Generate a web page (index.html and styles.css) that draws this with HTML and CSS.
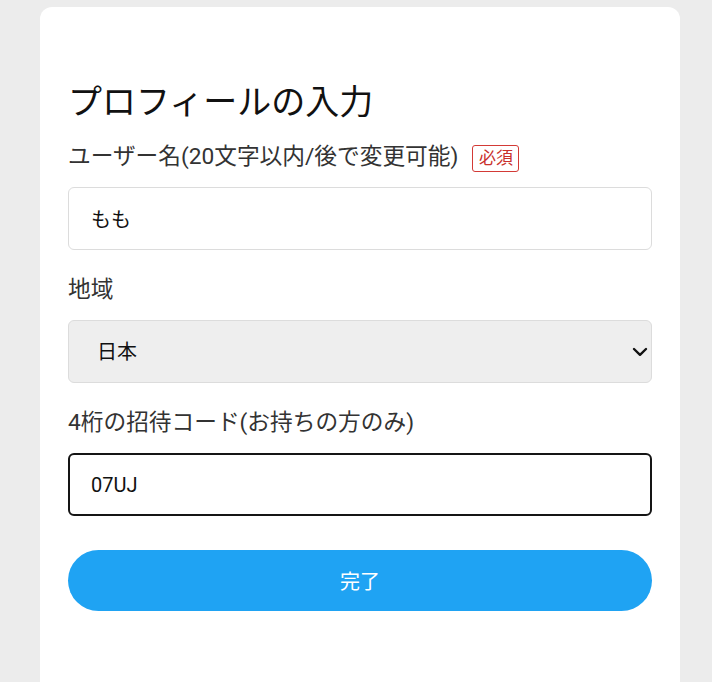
FILE: index.html
```html
<!DOCTYPE html>
<html lang="ja">
<head>
<meta charset="utf-8">
<title>プロフィールの入力</title>
<link rel="stylesheet" href="styles.css">
</head>
<body>
<main class="page">
  <form class="card">
    <h1 class="title">プロフィールの入力</h1>
    <div class="field">
      <div class="label-row">
        <label class="label" for="name">ユーザー名(20文字以内/後で変更可能)</label>
        <span class="badge">必須</span>
      </div>
      <input id="name" class="input" type="text" value="もも">
    </div>
    <div class="field">
      <label class="label" for="region">地域</label>
      <div class="select-wrap">
        <select id="region" class="select">
          <option>日本</option>
        </select>
        <svg class="chevron" width="16" height="10" viewBox="0 0 16 10" aria-hidden="true">
          <path d="M2 2 L8 7.8 L14 2" fill="none" stroke="#111" stroke-width="2.4" stroke-linecap="round" stroke-linejoin="round"/>
        </svg>
      </div>
    </div>
    <div class="field">
      <label class="label" for="code">4桁の招待コード(お持ちの方のみ)</label>
      <input id="code" class="input input-focus" type="text" value="07UJ">
    </div>
    <button type="button" class="submit">完了</button>
  </form>
</main>
</body>
</html>
```

FILE: styles.css
```css
* {
  box-sizing: border-box;
}

html, body {
  margin: 0;
  padding: 0;
  background: #ececec;
  height: 100%;
  overflow: hidden;
}

body {
  font-family: Roboto, "Noto Sans CJK JP", sans-serif;
  color: #111;
}

.page {
  padding: 7px 0 0 40px;
}

.card {
  width: 640px;
  min-height: 720px;
  background: #ffffff;
  border-radius: 12px;
  padding: 71px 28px 40px;
  display: flex;
  flex-direction: column;
}

.title {
  margin: 0 0 14px 0;
  font-size: 34px;
  font-weight: 400;
  line-height: 49px;
  color: #111;
}

.field {
  display: flex;
  flex-direction: column;
  margin-bottom: 24px;
}

.label-row {
  display: flex;
  align-items: flex-start;
  gap: 14px;
}

.label {
  font-size: 22.7px;
  line-height: 32px;
  color: #333;
  margin-bottom: 14px;
}

.badge {
  font-size: 17px;
  line-height: 25px;
  padding: 0 5.5px;
  color: #c9302c;
  border: 1px solid #d33a36;
  border-radius: 3px;
  margin-top: 4px;
}

.input {
  width: 100%;
  height: 63px;
  border: 1px solid #dcdcdc;
  border-radius: 6px;
  padding: 0 22px;
  font-family: Roboto, "Noto Sans CJK JP", sans-serif;
  font-size: 20px;
  color: #111;
  background: #fff;
  outline: none;
}

.input-focus {
  border: 2px solid #151515;
  padding: 0 21px;
}

.select-wrap {
  position: relative;
}

.select {
  width: 100%;
  height: 63px;
  border: 1px solid #dcdcdc;
  border-radius: 6px;
  background: #eeeeee;
  padding: 0 28px;
  font-family: Roboto, "Noto Sans CJK JP", sans-serif;
  font-size: 20px;
  color: #111;
  -webkit-appearance: none;
  appearance: none;
  outline: none;
}

.chevron {
  position: absolute;
  right: 4px;
  top: 27px;
  pointer-events: none;
}

.submit {
  margin-top: 10px;
  width: 100%;
  height: 61px;
  border: none;
  border-radius: 31px;
  background: #1fa3f3;
  color: #ffffff;
  font-family: Roboto, "Noto Sans CJK JP", sans-serif;
  font-size: 20px;
}
```
